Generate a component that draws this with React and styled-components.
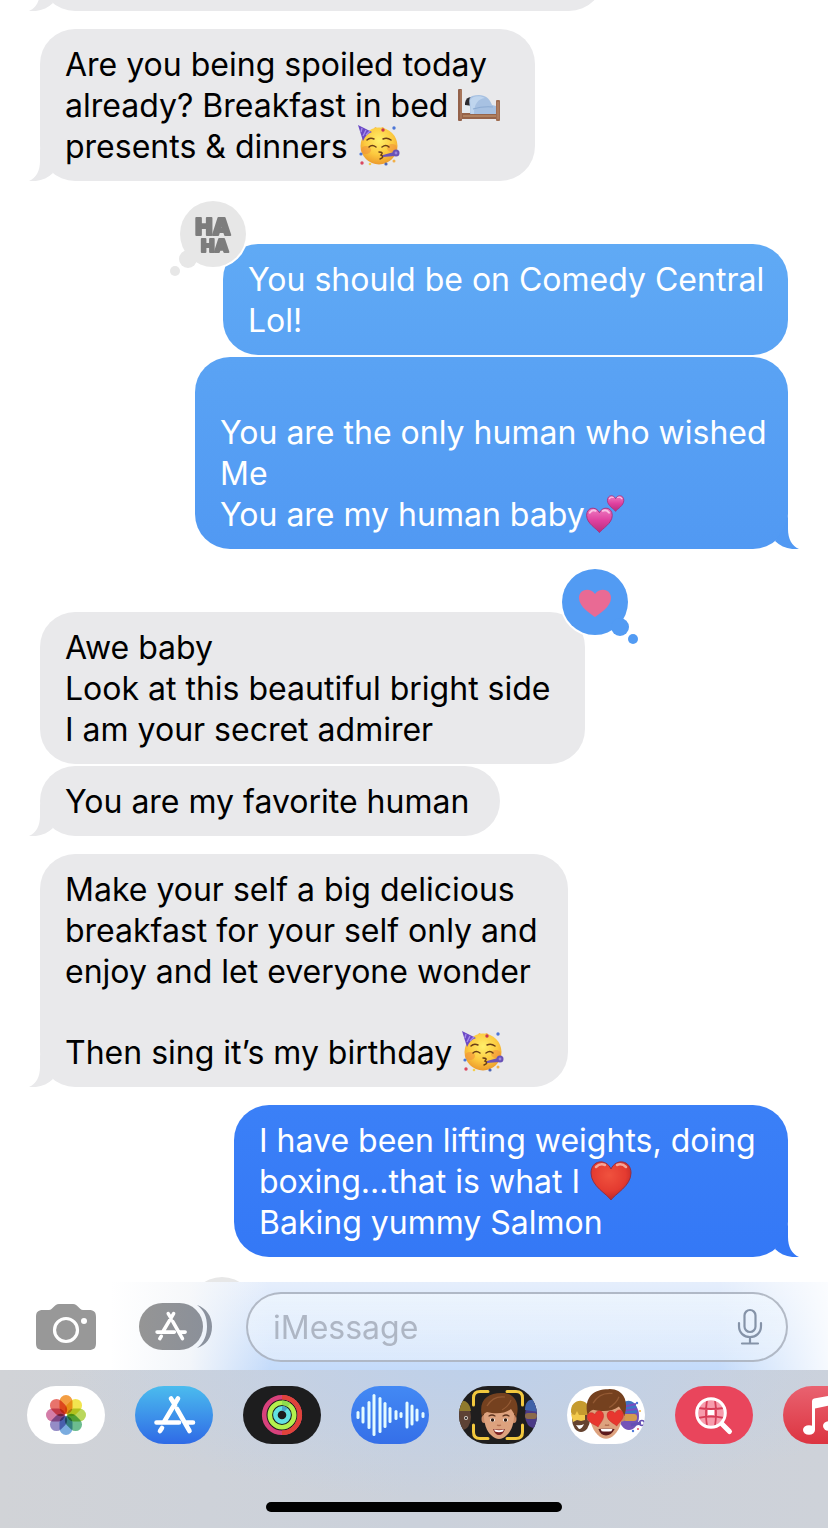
import React, {useState} from 'react';
import styled, {createGlobalStyle, css} from 'styled-components';

const GlobalStyle = createGlobalStyle`
  * {
    box-sizing: border-box;
  }

  body {
    margin: 0;
    background: #fff;
    font-family: Inter, 'Liberation Sans', sans-serif;
  }

  button {
    padding: 0;
    border: none;
    background: none;
    cursor: pointer;
  }
`;

const Page = styled.div`
  display: flex;
  flex-direction: column;
  height: 100vh;
  overflow: hidden;
`;

const Thread = styled.main`
  flex: 1;
  display: flex;
  flex-direction: column;
  min-height: 0;
  padding: 0 40px;
  overflow: hidden;
`;

const GAPS = {
    tight: 2,
    normal: 18,
    reaction: 63,
    scrolled: -59,
};

const Bubble = styled.div`
  position: relative;
  flex: none;
  align-self: flex-start;
  width: ${({$width}) => $width}px;
  max-width: 100%;
  min-height: 70px;
  margin-top: ${({$gap}) => GAPS[$gap]}px;
  padding: 15px 24px 14px 25px;
  border-radius: 35px;
  background: #e9e9eb;
  color: #000;
  font-size: 32px;
  line-height: 41px;
  white-space: pre;

  ${({$sent}) => $sent && css`
    align-self: flex-end;
    background: linear-gradient(${$sent[0]}, ${$sent[1]});
    color: #fff;
  `}
`;

const BlankLine = styled.span`
  display: block;
  height: 40px;
`;

const TailShape = styled.svg`
  position: absolute;
  bottom: 0;
  left: -11px;
  width: 28px;
  height: 34px;
  fill: #e9e9eb;
  transform: scaleX(-1);

  ${({$color}) => $color && css`
    right: -11px;
    left: auto;
    fill: ${$color};
    transform: none;
  `}
`;

const ReactionShape = styled.svg`
  position: absolute;
  top: -46px;
  left: -56px;
  width: 82px;
  height: 82px;
  overflow: visible;

  ${({$right}) => $right && css`
    right: -56px;
    left: auto;
  `}
`;

const EmojiShape = styled.svg`
  display: inline-block;
  width: 42px;
  height: 42px;
  margin: -4px 0 -4px 1px;
  vertical-align: -5px;
`;

const Composer = styled.form`
  display: flex;
  align-items: center;
  flex: none;
  padding: 10px 40px 8px 36px;
  background:
    linear-gradient(90deg, #fff 110px, rgba(250, 250, 250, 0.85) 190px, rgba(255, 255, 255, 0) 270px, rgba(255, 255, 255, 0) calc(100% - 110px), rgba(255, 255, 255, 0.85)),
    linear-gradient(#e5eefc, #c4dbfa);
`;

const CameraButton = styled.button`
  display: flex;
  margin-right: 43px;
`;

const AppsButton = styled.button`
  display: flex;
  margin-right: 34px;
`;

const Field = styled.div`
  flex: 1;
  display: flex;
  align-items: center;
  min-width: 0;
  height: 70px;
  padding: 0 23px 0 25px;
  border: 2px solid rgba(140, 146, 160, 0.6);
  border-radius: 35px;
  background: linear-gradient(rgba(240, 247, 254, 0.7), rgba(232, 241, 253, 0.6));
`;

const FieldInput = styled.input`
  flex: 1;
  min-width: 0;
  padding: 0;
  border: none;
  outline: none;
  background: none;
  color: #000;
  font-family: inherit;
  font-size: 32px;
  line-height: 41px;

  &::placeholder {
    color: #aeb6c4;
    opacity: 1;
  }
`;

const MicButton = styled.button`
  display: flex;
`;

const Tray = styled.footer`
  flex: none;
  padding: 16px 0;
  overflow: hidden;
  background:
    radial-gradient(ellipse 420px 130px at 58% 0, #bed0ea, rgba(190, 208, 234, 0)),
    linear-gradient(90deg, #d1d3d7, #cbd1db 50%, #ced2d9);
`;

const AppList = styled.nav`
  display: flex;
  gap: 30px;
  padding-left: 27px;
`;

const AppButton = styled.button`
  flex: none;
  width: 78px;
  height: 58px;
  border-radius: 30px;
  overflow: hidden;
  background: ${({$bg}) => $bg};

  svg {
    display: block;
  }
`;

const HomeIndicator = styled.div`
  width: 296px;
  height: 10px;
  margin: 58px auto 0;
  border-radius: 5px;
  background: #000;
`;

const Tail = ({color}) => (
    <TailShape $color={color} viewBox="0 0 28 34" aria-hidden="true">
        <path d="M17 0V14C17 24 21 31 28 34C19 35 10 32 4 26L13 13Z"/>
    </TailShape>
);

const HahaReaction = ({plain}) => (
    <ReactionShape viewBox="0 0 82 82" role="img" aria-label="Haha">
        <circle cx="46" cy="36" r="35" fill="#fff"/>
        <g fill="#e7e7e7">
            <circle cx="46" cy="36" r="33"/>
            <circle cx="21" cy="61" r="9"/>
            <circle cx="8" cy="73" r="5"/>
        </g>
        {!plain && (
            <g fill="#7d7d7d" stroke="#7d7d7d" strokeWidth="2" strokeLinejoin="round" fontWeight="900" textAnchor="middle">
                <text x="46" y="37" fontSize="23">HA</text>
                <text x="48" y="54" fontSize="18">HA</text>
            </g>
        )}
    </ReactionShape>
);

const HeartReaction = () => (
    <ReactionShape $right viewBox="0 0 82 82" role="img" aria-label="Loved">
        <circle cx="36" cy="36" r="35" fill="#fff"/>
        <g fill="#529bf3">
            <circle cx="36" cy="36" r="33"/>
            <circle cx="61" cy="61" r="9"/>
            <circle cx="74" cy="73" r="5"/>
        </g>
        <path fill="#e96a94" d="M36 51C32 48 20 41 20 32C20 23 31 21 36 28C41 21 52 23 52 32C52 41 40 48 36 51Z"/>
    </ReactionShape>
);

const PartyFace = () => (
    <EmojiShape viewBox="0 0 42 42" role="img" aria-label="partying face">
        <defs>
            <radialGradient id="face" cx="0.5" cy="0.35" r="0.65">
                <stop offset="0" stopColor="#fff06a"/>
                <stop offset="0.6" stopColor="#fcc93f"/>
                <stop offset="1" stopColor="#ec9a2c"/>
            </radialGradient>
        </defs>
        <path d="M15 6L17 2L21 4L25 2L28 6Z" fill="#f6ad3c"/>
        <circle cx="21" cy="21" r="18.5" fill="url(#face)"/>
        <ellipse cx="8" cy="25" rx="5" ry="4" fill="#f08a3c" opacity="0.5"/>
        <ellipse cx="34" cy="23" rx="5" ry="4" fill="#f08a3c" opacity="0.5"/>
        <path d="M0 0L14 7C10 8 7 11 5 16Z" fill="#6b49c6"/>
        <path d="M4 3L3 7M8 5L5 11M12 6L8 10" stroke="#a58bea" strokeWidth="1.4"/>
        <g fill="none" stroke="#6b3f17" strokeWidth="1.5" strokeLinecap="round">
            <path d="M9 15Q12 12 16 14M25 14Q29 12 33 15"/>
            <path d="M11 22Q14 19 18 22M24 22Q28 19 31 22"/>
            <path d="M21 27Q26 27 23 30Q27 32 22 34"/>
        </g>
        <path d="M25 30L36 27L37 31L25 32Z" fill="#6b53b8"/>
        <circle cx="38" cy="28" r="3.5" fill="#6952b7"/>
        <circle cx="38" cy="28" r="1.4" fill="#9b86dc"/>
        <circle cx="25" cy="5" r="1.7" fill="#c83850"/>
        <circle cx="36" cy="3" r="1.7" fill="#4c76d6"/>
        <circle cx="3" cy="29" r="1.6" fill="#4c76d6"/>
        <circle cx="4" cy="38" r="1.7" fill="#da4860"/>
        <circle cx="28" cy="39" r="1.6" fill="#4c66b6"/>
        <circle cx="36" cy="36" r="1.5" fill="#f2b04a"/>
        <circle cx="12" cy="39" r="1.3" fill="#f5cf4a"/>
    </EmojiShape>
);

const Bed = () => (
    <EmojiShape viewBox="0 0 42 42" role="img" aria-label="bed">
        <path d="M3 25H39V35H3Z" fill="#96644a"/>
        <path d="M4 21L14 20V29H4Z" fill="#e4eaf0"/>
        <path d="M7 19Q8 12 15 13L15 22L7 21Z" fill="#2b2a2e"/>
        <path d="M12 30C14 24 8 15 14 12C24 9 31 12 34 21L38 22V30Z" fill="#a7c1e2"/>
        <path d="M12 16C14 12 22 11 27 14C20 15 16 20 16 30H13Z" fill="#bfd5ee"/>
        <path d="M15 25Q25 22 35 23" stroke="#8cabd2" strokeWidth="1.2" fill="none"/>
        <path d="M5 32H38" stroke="#b98a66" strokeWidth="1.5"/>
        <rect x="0" y="5" width="4" height="32" rx="1" fill="#93614a"/>
        <rect x="38" y="16" width="4" height="21" rx="1" fill="#a06e52"/>
        <path d="M3 6V35M40 18V35" stroke="#bb8b6c" strokeWidth="1"/>
    </EmojiShape>
);

const HEART = 'M21 40C17 34 1 26 1 13C1 0 16 -2 21 9C26 -2 41 0 41 13C41 26 25 34 21 40Z';

const RedHeart = () => (
    <EmojiShape viewBox="0 0 42 42" role="img" aria-label="red heart">
        <defs>
            <radialGradient id="red" cx="0.45" cy="0.35" r="0.7">
                <stop offset="0" stopColor="#f0523e"/>
                <stop offset="0.6" stopColor="#e43b30"/>
                <stop offset="1" stopColor="#b42326"/>
            </radialGradient>
        </defs>
        <path d={HEART} fill="url(#red)" stroke="#8f3048" strokeWidth="1"/>
        <path d="M6 7Q10 3 15 5M27 5Q32 3 36 7" stroke="#fbc0b0" strokeWidth="2.5" strokeLinecap="round" fill="none" opacity="0.8"/>
    </EmojiShape>
);

const TwoHearts = () => (
    <EmojiShape viewBox="0 0 42 42" role="img" aria-label="two hearts">
        <defs>
            <linearGradient id="pink" x2="0" y2="1">
                <stop offset="0" stopColor="#ee7cc2"/>
                <stop offset="0.5" stopColor="#df419f"/>
                <stop offset="1" stopColor="#b82c7c"/>
            </linearGradient>
        </defs>
        <g transform="translate(0 14) scale(0.64)">
            <path d={HEART} fill="url(#pink)" stroke="#a8307c" strokeWidth="1.5"/>
            <path d="M6 9Q10 3 15 6M26 6Q32 3 36 9" stroke="#f9c2e4" strokeWidth="3" strokeLinecap="round" fill="none"/>
        </g>
        <g transform="translate(21 2) scale(0.41)">
            <path d={HEART} fill="url(#pink)" stroke="#a8307c" strokeWidth="2"/>
            <path d="M6 9Q10 3 15 6M26 6Q32 3 36 9" stroke="#f9c2e4" strokeWidth="3" strokeLinecap="round" fill="none"/>
        </g>
    </EmojiShape>
);

const CameraIcon = () => (
    <svg width="60" height="48" viewBox="0 0 60 48">
        <path fill="#989898" d="M7 7H13C17 7 18 1 23 1H37C42 1 43 7 47 7H53C58 7 60 9 60 14V40C60 45 58 47 53 47H7C2 47 0 45 0 40V14C0 9 2 7 7 7Z"/>
        <circle cx="30" cy="27" r="11.5" fill="none" stroke="#fff" strokeWidth="3.2"/>
        <circle cx="48" cy="18" r="3" fill="#fff"/>
    </svg>
);

const StoreGlyph = ({transform}) => (
    <g transform={transform} fill="none" stroke="#fff" strokeWidth="4.6" strokeLinecap="round">
        <path d="M43 12.5L29 36M36 12.5L40 19M42 23L54.5 45M21.5 36.5H44M51 36.5H58M27 42L25 45"/>
    </g>
);

const AppsIcon = () => (
    <svg width="73" height="48" viewBox="0 0 73 48">
        <defs>
            <linearGradient id="apps">
                <stop offset="0" stopColor="#959595"/>
                <stop offset="1" stopColor="#8b9099"/>
            </linearGradient>
        </defs>
        <rect width="64" height="47" rx="23.5" fill="url(#apps)"/>
        <path d="M58 2C67 5 73 13 73 23.5C73 35 67 42 58 45C65 40 68 32 68 23.5C68 14 65 7 58 2Z" fill="#8b929e"/>
        <StoreGlyph transform="translate(1.5 1) scale(0.77)"/>
    </svg>
);

const MicIcon = () => (
    <svg width="26" height="38" viewBox="0 0 26 38" fill="none" stroke="#8593a8" strokeWidth="2.2" strokeLinecap="round">
        <rect x="7.5" y="2" width="11" height="22" rx="5.5"/>
        <path d="M2 15V18C2 25 7 29 13 29S24 25 24 18V15M13 29V35.5M5 35.5H21"/>
    </svg>
);

const PETALS = ['#f2932f', '#f1e23c', '#b3d34a', '#5cb583', '#6ba3dc', '#8a80c0', '#cf6f9f', '#e5645c'];

const PhotosIcon = () => (
    <svg width="78" height="58" viewBox="0 0 78 58">
        <g transform="translate(39 29)">
            {PETALS.map((color, i) => (
                <rect
                    key={color}
                    x="-6.5"
                    y="-20"
                    width="13"
                    height="19"
                    rx="6.5"
                    fill={color}
                    fillOpacity="0.9"
                    transform={`rotate(${i * 45})`}
                    style={{mixBlendMode: 'multiply'}}
                />
            ))}
        </g>
    </svg>
);

const StoreIcon = () => (
    <svg width="78" height="58" viewBox="0 0 78 58">
        <StoreGlyph/>
    </svg>
);

const ActivityIcon = () => (
    <svg width="78" height="58" viewBox="0 0 78 58" fill="none" strokeWidth="4.6">
        <circle cx="39" cy="29" r="17.8" stroke="#d8417c"/>
        <path d="M39 11.2A17.8 17.8 0 0 1 39 46.8" stroke="#e0433a"/>
        <circle cx="39" cy="29" r="12.2" stroke="#b4f04e"/>
        <path d="M39 16.8A12.2 12.2 0 0 1 46 19" stroke="#8fdc4e"/>
        <circle cx="39" cy="29" r="6.6" stroke="#62e2e2"/>
        <path d="M39 22.4A6.6 6.6 0 0 1 43 24" stroke="#4aa6c8"/>
    </svg>
);

const WAVE = [[7, 8], [12, 17], [18, 28], [23, 42], [29, 36], [34, 26], [39, 16], [45, 10], [50, 6], [56, 27], [61, 21], [66, 13], [72, 6]];

const AudioIcon = () => (
    <svg width="78" height="58" viewBox="0 0 78 58">
        {WAVE.map(([x, h]) => (
            <rect key={x} x={x - 1.5} y={29 - h / 2} width="3" height={h} rx="1.5" fill="#e4fbff"/>
        ))}
    </svg>
);

const BoyHead = ({transform, children}) => (
    <g transform={transform}>
        <ellipse cx="-15" cy="3" rx="2.5" ry="4" fill="#cb8a66"/>
        <ellipse cx="15" cy="3" rx="2.5" ry="4" fill="#cb8a66"/>
        <path d="M-15 -8C-16 6 -13 14 -8 19Q0 27 8 19C13 14 16 6 15 -8Z" fill="#dda27e"/>
        <path d="M-17 1C-21 -16 -11 -23 2 -23C15 -24 22 -13 17 2C16 -1 14 -4 12 -7C6 -2 -4 -2 -12 -4C-15 -3 -16 -1 -17 1Z" fill="#75411f"/>
        <path d="M-12 -10C-8 -17 -2 -20 6 -19M3 -6C8 -9 11 -13 12 -16" stroke="#945a34" strokeWidth="1.2" fill="none"/>
        {children}
    </g>
);

const MemojiIcon = () => (
    <svg width="78" height="58" viewBox="0 0 78 58">
        <ellipse cx="3" cy="31" rx="9" ry="13" fill="#5d4234"/>
        <path d="M-4 25C-3 12 10 11 12 25Z" fill="#8f7a2c"/>
        <circle cx="7" cy="32" r="2" fill="#d8d0c8"/>
        <circle cx="7" cy="32" r="1" fill="#111"/>
        <ellipse cx="75" cy="29" rx="9" ry="13" fill="#4b3a86"/>
        <path d="M66 24C66 10 78 12 80 20V26Z" fill="#3f62a8"/>
        <rect x="66" y="27" width="12" height="6" rx="3" fill="#8b6a4a"/>
        <BoyHead transform="translate(40 30)">
            <path d="M-10 0Q-7 -2 -4 0M4 0Q7 -2 10 0" stroke="#5d3420" strokeWidth="1.3" fill="none" strokeLinecap="round"/>
            <ellipse cx="-6.5" cy="4" rx="2.6" ry="1.7" fill="#fff"/>
            <ellipse cx="6.5" cy="4" rx="2.6" ry="1.7" fill="#fff"/>
            <circle cx="-6.5" cy="4" r="1.7" fill="#2e1a10"/>
            <circle cx="6.5" cy="4" r="1.7" fill="#2e1a10"/>
            <path d="M-2 9Q0 10 2 9" stroke="#b26f50" strokeWidth="1.3" fill="none"/>
            <path d="M-6 13Q0 14 6 13Q4 19 0 19Q-4 19 -6 13Z" fill="#7c2324"/>
            <path d="M-5 13.5Q0 15 5 13.5L4 15.5Q0 17 -4 15.5Z" fill="#fff"/>
        </BoyHead>
        <path d="M14.5 19V12Q14.5 5.5 21 5.5H29M48 5.5H57Q63.5 5.5 63.5 12V19M63.5 39V46Q63.5 52.5 57 52.5H48M29 52.5H21Q14.5 52.5 14.5 46V39" stroke="#f2c83e" strokeWidth="3" strokeLinecap="round" fill="none"/>
    </svg>
);

const StickersIcon = () => (
    <svg width="78" height="58" viewBox="0 0 78 58">
        <ellipse cx="14" cy="33" rx="9" ry="13" fill="#65432f"/>
        <path d="M4 26C3 12 22 10 23 26L22 29H5Z" fill="#c69b2f"/>
        <path d="M4 28L8 29L10 25L12 29L18 29V34L14 35L10 34L6 36Z" fill="#f2c94c"/>
        <path d="M9 39Q14 40 17 38Q15 43 12 43Z" fill="#fff"/>
        <ellipse cx="62" cy="30" rx="10" ry="14" fill="#7453b8"/>
        <path d="M54 24C54 12 68 12 70 23V27H54Z" fill="#3f74c4"/>
        <path d="M55 21L69 18M55 25L70 23" stroke="#7a4bc0" strokeWidth="2"/>
        <rect x="56" y="28" width="14" height="7" rx="3" fill="#d49b4e"/>
        <path d="M64 39L74 37" stroke="#6550b4" strokeWidth="3"/>
        <circle cx="75" cy="37" r="2.5" fill="none" stroke="#6550b4" strokeWidth="1.5"/>
        <circle cx="70" cy="17" r="1.2" fill="#4c76d6"/>
        <circle cx="73" cy="25" r="1" fill="#f0b040"/>
        <circle cx="66" cy="45" r="1.2" fill="#4c76d6"/>
        <circle cx="71" cy="43" r="1" fill="#e14a60"/>
        <BoyHead transform="translate(39 28) scale(1.08 1.08)">
            <path d="M-7 14Q0 13 8 14Q5 20 0 20Q-5 20 -7 14Z" fill="#5d1a1c"/>
            <path d="M-5 14Q0 13.5 6 14L5 16Q0 16.5 -4 16Z" fill="#fff"/>
            <path d="M-1 10Q1 11 3 10" stroke="#b26f50" strokeWidth="1.3" fill="none"/>
            <g fill="#e8372f" stroke="#c22727">
                <path transform="translate(-17 -3) rotate(-14 8 8) scale(0.38)" d={HEART}/>
                <path transform="translate(1 -4) rotate(-8 8 8) scale(0.38)" d={HEART}/>
            </g>
        </BoyHead>
    </svg>
);

const ImagesIcon = () => (
    <svg width="78" height="58" viewBox="0 0 78 58">
        <circle cx="36" cy="27" r="14" fill="#f79cac"/>
        <path d="M33 23H39V29H33Z" fill="#fff"/>
        <path d="M32 14Q30 27 32 40M40 14Q42 27 40 40M23 22Q36 24 49 22M23 32Q36 29 49 32" stroke="#d63c56" strokeWidth="1.8" fill="none"/>
        <circle cx="36" cy="27" r="14.3" fill="none" stroke="#fff" strokeWidth="3"/>
        <path d="M47 38L54.5 45.5" stroke="#fff" strokeWidth="5" strokeLinecap="round"/>
    </svg>
);

const MusicIcon = () => (
    <svg width="78" height="58" viewBox="0 0 78 58" fill="#fff">
        <ellipse cx="26" cy="44" rx="6" ry="4.8"/>
        <ellipse cx="46" cy="40" rx="6" ry="4.8"/>
        <path d="M29 15Q29 13 31 12.5L50 9Q52 9 52 11V40H48.5V19L32 22.5V44H29Z"/>
    </svg>
);

const MESSAGES = [
    {id: 1, width: 564, gap: 'scrolled', tail: true},
    {
        id: 2,
        width: 495,
        gap: 'normal',
        tail: true,
        body: <>{'Are you being spoiled today\nalready? Breakfast in bed '}<Bed/>{'\npresents & dinners '}<PartyFace/></>,
    },
    {
        id: 3,
        width: 565,
        gap: 'reaction',
        sent: ['#60aaf5', '#5aa3f4'],
        reaction: 'haha',
        body: 'You should be on Comedy Central\nLol!',
    },
    {
        id: 4,
        width: 593,
        gap: 'tight',
        sent: ['#5aa3f4', '#5199f3'],
        tail: true,
        body: <><BlankLine/>{'You are the only human who wished\nMe\nYou are my human baby'}<TwoHearts/></>,
    },
    {
        id: 5,
        width: 545,
        gap: 'reaction',
        reaction: 'heart',
        body: 'Awe baby\nLook at this beautiful bright side\nI am your secret admirer',
    },
    {id: 6, width: 460, gap: 'tight', tail: true, body: 'You are my favorite human'},
    {
        id: 7,
        width: 528,
        gap: 'normal',
        tail: true,
        body: (
            <>
                {'Make your self a big delicious\nbreakfast for your self only and\nenjoy and let everyone wonder'}
                <BlankLine/>
                {'Then sing it’s my birthday '}
                <PartyFace/>
            </>
        ),
    },
    {
        id: 8,
        width: 554,
        gap: 'normal',
        sent: ['#3b80f7', '#3478f6'],
        tail: true,
        body: <>{'I have been lifting weights, doing\nboxing...that is what I '}<RedHeart/>{'\nBaking yummy Salmon'}</>,
    },
    {id: 9, width: 556, gap: 'reaction', sent: ['#3478f6', '#3478f6'], reaction: 'plain'},
];

const APPS = [
    {name: 'Photos', bg: '#fff', Icon: PhotosIcon},
    {name: 'App Store', bg: 'linear-gradient(#4bbcee, #2f6ae6)', Icon: StoreIcon},
    {name: 'Activity', bg: '#1d1d1e', Icon: ActivityIcon},
    {name: 'Audio', bg: 'linear-gradient(#4389f4, #356fe8)', Icon: AudioIcon},
    {name: 'Memoji', bg: '#1f1e1e', Icon: MemojiIcon},
    {name: 'Stickers', bg: '#fff', Icon: StickersIcon},
    {name: 'Images', bg: '#e9455c', Icon: ImagesIcon},
    {name: 'Music', bg: 'linear-gradient(#e96270, #dc3440)', Icon: MusicIcon},
];

const Message = ({width, gap, sent, tail, reaction, body}) => (
    <Bubble $width={width} $gap={gap} $sent={sent}>
        {body}
        {tail && <Tail color={sent ? sent[1] : null}/>}
        {reaction === 'haha' && <HahaReaction/>}
        {reaction === 'plain' && <HahaReaction plain/>}
        {reaction === 'heart' && <HeartReaction/>}
    </Bubble>
);

const App = () => {
    const [draft, setDraft] = useState('');

    return (
        <Page>
            <GlobalStyle/>
            <Thread>
                {MESSAGES.map(({id, ...message}) => <Message key={id} {...message}/>)}
            </Thread>
            <Composer onSubmit={(e) => e.preventDefault()}>
                <CameraButton type="button" aria-label="Camera"><CameraIcon/></CameraButton>
                <AppsButton type="button" aria-label="Apps"><AppsIcon/></AppsButton>
                <Field>
                    <FieldInput
                        type="text"
                        aria-label="Message"
                        placeholder="iMessage"
                        value={draft}
                        onChange={(e) => setDraft(e.target.value)}
                    />
                    <MicButton type="button" aria-label="Dictate"><MicIcon/></MicButton>
                </Field>
            </Composer>
            <Tray>
                <AppList aria-label="Message apps">
                    {APPS.map(({name, bg, Icon}) => (
                        <AppButton key={name} type="button" $bg={bg} aria-label={name}><Icon/></AppButton>
                    ))}
                </AppList>
                <HomeIndicator/>
            </Tray>
        </Page>
    );
};

export default App;
